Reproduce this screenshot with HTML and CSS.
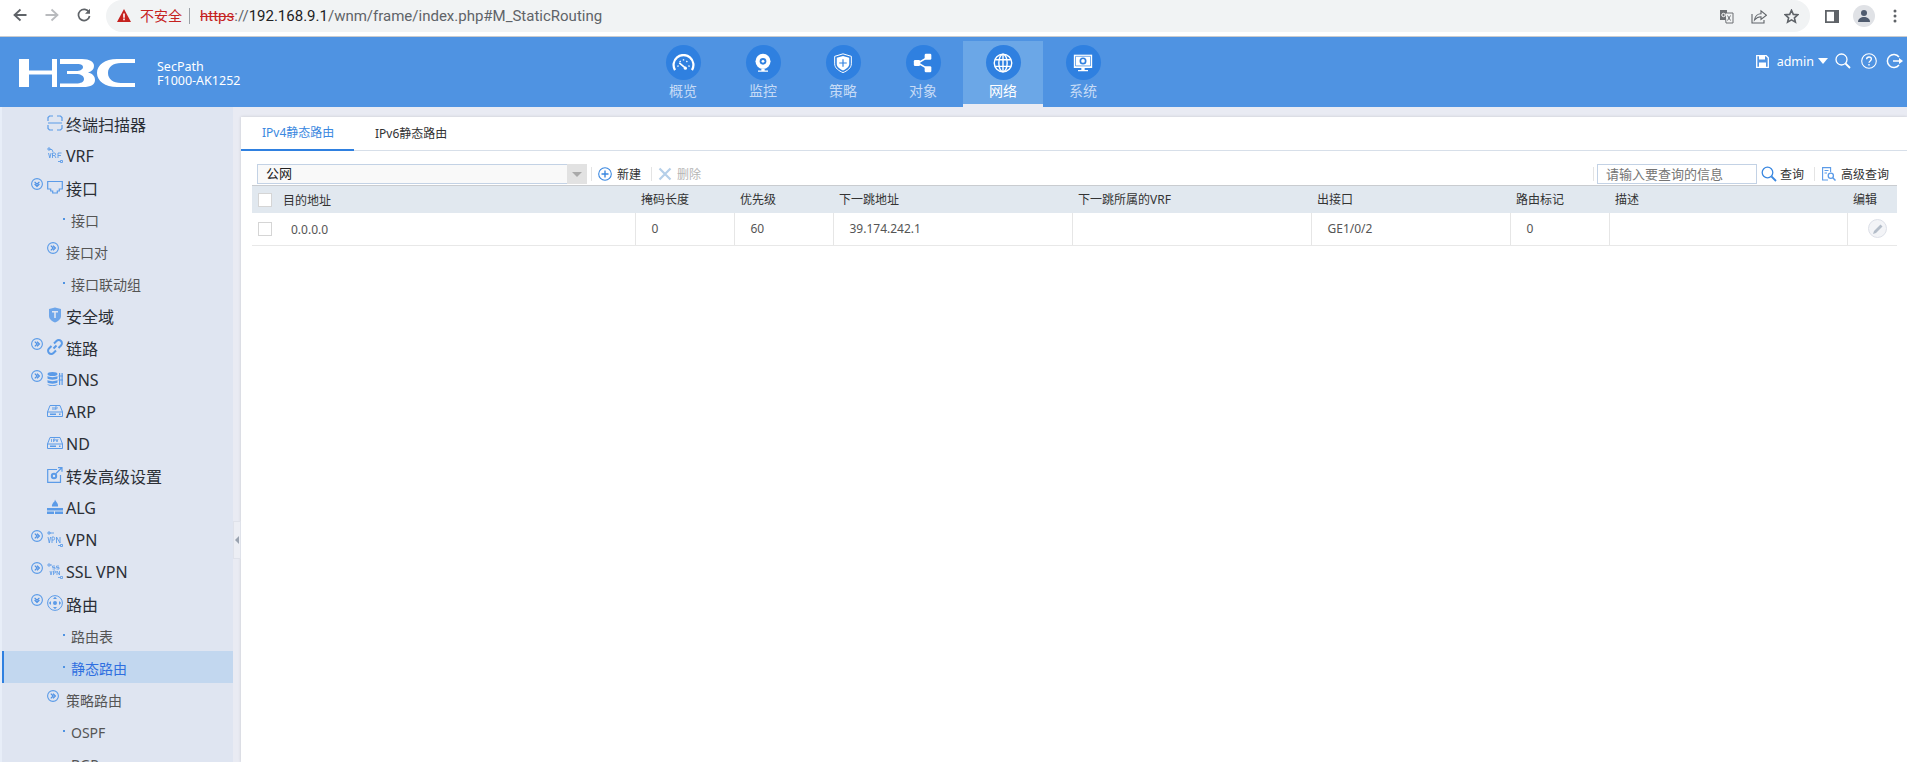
FILE: index.html
```html
<!DOCTYPE html>
<html lang="zh-CN">
<head>
  <meta charset="UTF-8" />
  <title>H3C SecPath F1000-AK1252</title>
  <link rel="stylesheet" href="styles.css">
</head>
<body>
  <svg class="defs" width="0" height="0">
    <symbol id="arrow-right" viewBox="0 0 12 12">
      <circle cx="6" cy="6" r="5.4" fill="none" stroke="#5b9be8" stroke-width="1.100"/>
      <path d="M3.800 3.600 6.200 6 3.800 8.400M6 3.600 8.400 6 6 8.400" fill="none" stroke="#4a8fe4" stroke-width="1.200"/>
    </symbol>
    <symbol id="arrow-down" viewBox="0 0 12 12">
      <circle cx="6" cy="6" r="5.4" fill="none" stroke="#5b9be8" stroke-width="1.100"/>
      <path d="M3.600 3.800 6 6.200 8.400 3.800M3.600 6 6 8.400 8.400 6" fill="none" stroke="#4a8fe4" stroke-width="1.200"/>
    </symbol>
  </svg>

  <!-- Browser bar -->
  <div class="browser-bar">
    <svg class="nav-arrow" viewBox="0 0 14 14"><path d="M13.500 7H2M7.500 1.500 1.500 7 7.500 12.500" fill="none" stroke="#5f6368" stroke-width="1.800"/></svg>
    <svg class="nav-arrow" viewBox="0 0 14 14"><path d="M.5 7H12M6.500 1.500 12.500 7 6.500 12.500" fill="none" stroke="#b9bbbe" stroke-width="1.800"/></svg>
    <svg class="nav-arrow" viewBox="0 0 14 14"><path d="M12 4.200A5.600 5.600 0 1 0 12.600 8" fill="none" stroke="#5f6368" stroke-width="1.700"/><path d="M13 .8v5H8z" fill="#5f6368"/></svg>
    <div class="omnibox">
      <svg class="warn" viewBox="0 0 14 13"><path d="M7 0 14 13H0z" fill="#c5221f"/><path d="M6.200 4.500h1.600v4.300H6.200zM6.200 9.600h1.600v1.600H6.200z" fill="#fff"/></svg>
      <span class="insecure">不安全</span>
      <span class="url"><s>https</s><span class="url-dim">://</span><span class="url-host">192.168.9.1</span><span class="url-dim">/wnm/frame/index.php#M_StaticRouting</span></span>
      <div class="omni-icons">
        <svg viewBox="0 0 15 15" width="15" height="15"><path d="M1 1h7v10H1z" fill="#6c6f73"/><path d="M6 4h8v10H7z" fill="#f1f3f4" stroke="#6c6f73"/><path d="M8.500 6.500l3 5M11.500 6.500l-3 5" stroke="#6c6f73" fill="none"/><circle cx="4.500" cy="6" r="1.700" fill="none" stroke="#fff"/></svg>
        <svg viewBox="0 0 16 15" width="16" height="15"><path d="M1 5v9h12v-3" fill="none" stroke="#5f6368" stroke-width="1.100"/><path d="M3.500 11C4 7 7 4.800 10 4.800V1.800L15.500 6.300 10 10.500V7.800C7.500 7.800 5.500 8.800 3.500 11z" fill="none" stroke="#5f6368" stroke-width="1.100"/></svg>
        <svg viewBox="0 0 15 15" width="15" height="15"><path d="M7.500 1.300 9.300 5.400l4.500.4-3.400 3 1 4.400-3.900-2.300-3.900 2.300 1-4.400-3.400-3 4.500-.4z" fill="none" stroke="#5f6368" stroke-width="1.600"/></svg>
      </div>
    </div>
    <div class="browser-icons">
      <svg viewBox="0 0 14 13" width="14" height="13"><path d="M0 0h14v13H0zM1.800 1.800v9.400H9V1.800z" fill="#5f6368" fill-rule="evenodd"/></svg>
      <div class="avatar"><svg viewBox="0 0 14 14" width="14" height="14"><circle cx="7" cy="4" r="3" fill="#4f5b6e"/><path d="M1 13c0-3.500 3-5 6-5s6 1.500 6 5z" fill="#4f5b6e"/></svg></div>
      <svg viewBox="0 0 4 14" width="4" height="14"><circle cx="2" cy="2" r="1.500" fill="#5f6368"/><circle cx="2" cy="7" r="1.500" fill="#5f6368"/><circle cx="2" cy="12" r="1.500" fill="#5f6368"/></svg>
    </div>
  </div>

  <!-- Header -->
  <header class="top">
    <div class="brand">
      <svg class="logo" viewBox="0 0 116 28" width="116" height="28">
        <path d="M0 0h10v11.500h23V0h5v28h-5V15.500H10V28H0z" fill="#fff"/>
        <path d="M41 0h22c8 0 12 3 12 7 0 3-2 5.500-6 6.500 4.500 1 7 3.500 7 7.500 0 4.500-4 7-12 7H41v-3.500h16c5 0 8-1.500 8-4.500s-3-5-8-5H48v-3h9c4 0 7-1.500 7-4s-3-3-7-3H41z" fill="#fff"/>
        <path d="M116 0H98C86 0 78 6 78 14s8 14 20 14h18v-4h-14c-8 0-13-4-13-10s5-10 13-10h14z" fill="#fff"/>
      </svg>
      <div class="model">SecPath<br>F1000-AK1252</div>
    </div>
    <nav class="main-nav">
      <a class="nav-item">
        <span class="nav-circle"><svg class="gauge" viewBox="0 0 24 18" fill="none" stroke="#fff"><path d="M3 17A10.500 10.500 0 1 1 21 17" stroke-width="2.400"/><path d="M5.500 12.500l1.300.5M8 7.500l.9.9M12 5.500v1.400M16 7.500l-.9.900M18.500 12.500l-1.300.5" stroke-width="1.500"/><path d="M7.500 9.500l6 5" stroke-width="1.700"/><circle cx="14" cy="15" r="1.700" fill="#fff" stroke="none"/></svg></span>
        概览
      </a>
      <a class="nav-item">
        <span class="nav-circle"><svg viewBox="0 0 24 24"><circle cx="12" cy="10" r="9" fill="#fff"/><circle cx="12" cy="10" r="4" fill="#2f80e0"/><circle cx="12" cy="10" r="1.700" fill="#fff"/><path d="M10 18.500h4v2.500h4v1.500H6V21h4z" fill="#fff"/></svg></span>
        监控
      </a>
      <a class="nav-item">
        <span class="nav-circle"><svg viewBox="0 0 24 24"><path d="M12 1l10 3v9c0 5-5 8.500-10 10.500C7 21.500 2 18 2 13V4z" fill="none" stroke="#fff" stroke-width="1.200"/><path d="M12 3.500l7.500 2.200V13c0 3.800-3.700 6.500-7.500 8-3.800-1.500-7.500-4.200-7.500-8V5.700z" fill="#fff"/><path d="M12 7.500v9M7.500 12h9" stroke="#2f80e0" stroke-width="1.400"/></svg></span>
        策略
      </a>
      <a class="nav-item">
        <span class="nav-circle"><svg viewBox="0 0 24 24"><path d="M6 12 18 5M6 12l12 7" stroke="#fff" stroke-width="1.800"/><rect x="1" y="8.500" width="7.500" height="7" rx="1.500" fill="#fff"/><rect x="14" y="1" width="8" height="7" rx="1.500" fill="#fff"/><rect x="14" y="16" width="8" height="7" rx="1.500" fill="#fff"/></svg></span>
        对象
      </a>
      <a class="nav-item active">
        <span class="nav-circle"><svg viewBox="0 0 24 24" fill="none" stroke="#fff" stroke-width="1.700"><circle cx="12" cy="12" r="10.500"/><ellipse cx="12" cy="12" rx="5" ry="10.500"/><path d="M12 1.500v21M2.500 8h19M2.500 16h19"/></svg></span>
        网络
      </a>
      <a class="nav-item">
        <span class="nav-circle"><svg viewBox="0 0 24 24"><path d="M1 2h22v16H1z" fill="#fff"/><path d="M3 4h18v11.500H3z" fill="none" stroke="#2f80e0" stroke-width=".8"/><circle cx="12" cy="9.500" r="3.200" fill="none" stroke="#2f80e0" stroke-width="2"/><path d="M10 18h4v2.500h4V22H6v-1.500h4z" fill="#fff"/></svg></span>
        系统
      </a>
    </nav>
    <div class="tools">
      <svg viewBox="0 0 13 13" width="13" height="13"><path d="M.7.700h9.500l2.100 2.100v9.500H.7z" fill="none" stroke="#fff" stroke-width="1.300"/><path d="M3 1h6v3.500H3zM3 7.500h7v4.500H3z" fill="#fff"/></svg>
      <span class="user">admin</span>
      <span class="caret"></span>
      <svg class="tool-search" viewBox="0 0 16 16" width="16" height="16"><circle cx="6.500" cy="6.500" r="5.500" fill="none" stroke="#fff" stroke-width="1.300"/><path d="M10.500 10.500 15 15" stroke="#fff" stroke-width="1.800"/></svg>
      <svg class="tool-help" viewBox="0 0 16 16" width="16" height="16"><circle cx="8" cy="8" r="7.300" fill="none" stroke="#fff" stroke-width="1.100"/><path d="M5.600 6.200C5.700 4.700 6.800 4 8 4c1.400 0 2.400.9 2.400 2.100 0 1.800-2.400 1.800-2.400 3.700" fill="none" stroke="#fff" stroke-width="1.300"/><path d="M7.300 11h1.400v1.400H7.300z" fill="#fff"/></svg>
      <svg class="tool-exit" viewBox="0 0 17 16" width="17" height="16"><path d="M13 4A6.500 6.500 0 1 0 13 12" fill="none" stroke="#fff" stroke-width="1.500"/><path d="M7 8h8" stroke="#fff" stroke-width="1.500"/><path d="M13 5l4 3-4 3z" fill="#fff"/></svg>
    </div>
  </header>

  <div class="page">
    <!-- Side menu -->
    <aside class="side">
      <div class="menu-row"><span class="arrow"></span><svg class="ico" viewBox="0 0 16 16" fill="none" stroke="#5b9be8" stroke-width="1.200"><path d="M1 6V2.500L2.500 1H6M10 1h3.500L15 2.500V6M1 10v3.500L2.500 15H6M10 15h3.500l1.500-1.500V10M1 8h14"/></svg><span class="label">终端扫描器</span></div>
      <div class="menu-row"><span class="arrow"></span><svg class="ico" viewBox="0 0 16 16" fill="none" stroke="#5b9be8" stroke-width=".9"><path d="M2.500 2.500H5L6 5M1 1h2v2H1zM11 14.500h2.500M13.500 13.500h2v2h-2z"/><path d="M1.500 6l1.300 5 1.300-5M5.500 11V6h2c1.500 0 1.500 2.500 0 2.500h-2M7.500 8.500 9 11M11 11V6h3.500M11 8.500h3"/></svg><span class="label">VRF</span></div>
      <div class="menu-row"><svg class="arrow" viewBox="0 0 12 12"><use href="#arrow-down"/></svg><svg class="ico" viewBox="0 0 16 16" fill="none" stroke="#5b9be8" stroke-width="1.200"><path d="M.7 2.500h14.600v7.500h-3v2h-2v2H5.700v-2h-2v-2h-3z"/></svg><span class="label">接口</span></div>
      <div class="menu-row sub leaf"><span class="dot"></span><span class="label">接口</span></div>
      <div class="menu-row sub"><svg class="arrow" viewBox="0 0 12 12"><use href="#arrow-right"/></svg><span class="label">接口对</span></div>
      <div class="menu-row sub leaf"><span class="dot"></span><span class="label">接口联动组</span></div>
      <div class="menu-row"><span class="arrow"></span><svg class="ico" viewBox="0 0 16 16"><path d="M8 .5 14 2v7c0 3-3 5.500-6 6.500C5 14.500 2 12 2 9V2z" fill="#6ea6ea"/><path d="M5 4h6v1.500H8.800V11H7.200V5.500H5z" fill="#dfe5f1"/></svg><span class="label">安全域</span></div>
      <div class="menu-row"><svg class="arrow" viewBox="0 0 12 12"><use href="#arrow-right"/></svg><svg class="ico" viewBox="0 0 16 16" fill="none" stroke="#5b9be8" stroke-width="2"><path d="M6.500 9.500 9.500 6.500M7 4.500 9.500 2a3 3 0 0 1 4.500 4.500L11.500 9M9 11.500 6.500 14A3 3 0 0 1 2 9.500L4.500 7"/></svg><span class="label">链路</span></div>
      <div class="menu-row"><svg class="arrow" viewBox="0 0 12 12"><use href="#arrow-right"/></svg><svg class="ico" viewBox="0 0 16 16" fill="#5b9be8"><ellipse cx="5.500" cy="3" rx="5" ry="2"/><path d="M.5 5c1.500 1.500 8.500 1.500 10 0v2.500c-1.500 1.500-8.500 1.500-10 0zM.5 9c1.500 1.500 8.500 1.500 10 0v2.500c-1.500 1.500-8.500 1.500-10 0zM.5 13c1.500 1.500 8.500 1.500 10 0v.5c-1.500 2-8.500 2-10 0z"/><path d="M12 2h1.200v12H12zM14.500 2h1.200v12h-1.200zM11.500 4.500H16v1h-4.500zM11.500 8.500H16v1h-4.500z"/></svg><span class="label">DNS</span></div>
      <div class="menu-row"><span class="arrow"></span><svg class="ico" viewBox="0 0 16 16" fill="none" stroke="#5b9be8"><path d="M3 2.500h10L15.500 9v4.500H.5V9zM.5 9h15"/><path d="M3 11.200h6M12 11.200h1.500" stroke-width="1.400"/><path d="M6 4v3M8 7V4h1.500c1 0 1 1.800 0 1.800H8"/></svg><span class="label">ARP</span></div>
      <div class="menu-row"><span class="arrow"></span><svg class="ico" viewBox="0 0 16 16" fill="none" stroke="#5b9be8"><path d="M3 2.500h10L15.500 9v4.500H.5V9zM.5 9h15"/><path d="M3 11.200h6M12 11.200h1.500" stroke-width="1.400"/><path d="M4.500 4v3M6.500 7V4H8v1.800H6.500M9 4l1 3 1-3" stroke-width=".8"/></svg><span class="label">ND</span></div>
      <div class="menu-row"><span class="arrow"></span><svg class="ico" viewBox="0 0 16 16" fill="none" stroke="#5b9be8" stroke-width="1.200"><path d="M10 2.500H.7v12.800h12.800V8"/><path d="M9 6.500 14.500 1M11 .7h4v4"/><circle cx="7" cy="9" r="2.200" stroke-width="2"/></svg><span class="label">转发高级设置</span></div>
      <div class="menu-row"><span class="arrow"></span><svg class="ico" viewBox="0 0 16 16" fill="#5b9be8"><path d="M8 .5c1 2.500 3.500 3.500 3 7H5C4.500 5.500 6 5 6 3.500 7 4 7.500 2.500 8 .5z"/><path d="M0 9h16v2.500H0zM0 12.500h7V15H0zM8 12.500h8V15H8z"/></svg><span class="label">ALG</span></div>
      <div class="menu-row"><svg class="arrow" viewBox="0 0 12 12"><use href="#arrow-right"/></svg><svg class="ico" viewBox="0 0 16 16" fill="none" stroke="#5b9be8" stroke-width=".9"><path d="M2.500 2H7M1 1h2v2H1zM11 14.500h2.500M13.500 13.500h2v2h-2z"/><path d="M1 6l1.300 6 1.300-6M5 12V6h1.500c1.500 0 1.500 3 0 3H5M9.500 12V6l3.500 6V6"/></svg><span class="label">VPN</span></div>
      <div class="menu-row"><svg class="arrow" viewBox="0 0 12 12"><use href="#arrow-right"/></svg><svg class="ico" viewBox="0 0 16 16" fill="none" stroke="#5b9be8" stroke-width=".8"><path d="M1 1h2v2H1zM3 2h2M13.500 13.500h2v2h-2zM11 14.500h2.500"/><path d="M8 3H5.500v1.500H8V6H5.500M12 3H9.500v1.500H12V6H9.500M3 8l1 4 1-4M6.500 12V8H8c1 0 1 2 0 2H6.500M10 12V8l2.500 4V8"/></svg><span class="label">SSL VPN</span></div>
      <div class="menu-row"><svg class="arrow" viewBox="0 0 12 12"><use href="#arrow-down"/></svg><svg class="ico" viewBox="0 0 16 16" fill="none" stroke="#5b9be8"><circle cx="8" cy="8" r="7.400"/><path d="M8 1.800 10 4H6zM8 14.200 6 12h4zM1.800 8 4 6v4zM14.200 8 12 10V6z" fill="#5b9be8" stroke="none"/><circle cx="8" cy="8" r="2" fill="#5b9be8" stroke="none"/></svg><span class="label">路由</span></div>
      <div class="menu-row sub leaf"><span class="dot"></span><span class="label">路由表</span></div>
      <div class="menu-row sub leaf selected"><span class="dot"></span><span class="label">静态路由</span></div>
      <div class="menu-row sub"><svg class="arrow" viewBox="0 0 12 12"><use href="#arrow-right"/></svg><span class="label">策略路由</span></div>
      <div class="menu-row sub leaf"><span class="dot"></span><span class="label">OSPF</span></div>
      <div class="menu-row sub leaf"><span class="dot"></span><span class="label">BGP</span></div>
    </aside>
    <div class="gutter"><span class="collapse-btn"></span></div>

    <!-- Content -->
    <main class="panel">
      <div class="tabs">
        <a class="tab active">IPv4静态路由</a>
        <a class="tab">IPv6静态路由</a>
      </div>
      <div class="toolbar">
        <div class="select"><span class="select-text">公网</span><span class="select-btn"></span></div>
        <span class="sep first"></span>
        <a class="tool-btn"><svg viewBox="0 0 14 14" width="14" height="14" fill="none" stroke="#3b88e0" stroke-width="1.100"><circle cx="7" cy="7" r="6.300"/><path d="M7 3.500v7M3.500 7h7" stroke-width="1.400"/></svg>新建</a>
        <span class="sep after-new"></span>
        <a class="tool-btn disabled"><svg viewBox="0 0 14 14" width="14" height="14" stroke="#b5cfe9" stroke-width="2.200"><path d="M1.500 1.500l11 11M12.500 1.500l-11 11"/></svg>删除</a>
        <span class="sep push"></span>
        <input class="search" type="text" placeholder="请输入要查询的信息">
        <a class="tool-btn query"><svg viewBox="0 0 16 16" width="16" height="16" fill="none" stroke="#3b88e0"><circle cx="6.500" cy="6.500" r="5.300" stroke-width="1.300"/><path d="M10.500 10.500 15 15" stroke-width="1.800"/></svg>查询</a>
        <span class="sep after-query"></span>
        <a class="tool-btn"><svg viewBox="0 0 14 14" width="14" height="14" fill="none" stroke="#5b9be8" stroke-width="1.100"><path d="M6 13H.6V.6h8V5"/><path d="M2.500 3.500h4M2.500 6h2.500" /><circle cx="8.800" cy="8.800" r="2.600" stroke-width="1.300"/><path d="M10.800 10.800 13.500 13.500" stroke-width="1.500"/></svg>高级查询</a>
      </div>
      <table class="grid">
        <colgroup>
          <col class="c-dest"><col class="c-mask"><col class="c-pri"><col class="c-hop"><col class="c-vrf"><col class="c-if"><col class="c-tag"><col class="c-desc"><col class="c-edit">
        </colgroup>
        <thead>
          <tr>
            <th class="dest-head"><span class="check"></span><span>目的地址</span></th>
            <th>掩码长度</th>
            <th>优先级</th>
            <th>下一跳地址</th>
            <th>下一跳所属的VRF</th>
            <th>出接口</th>
            <th>路由标记</th>
            <th>描述</th>
            <th>编辑</th>
          </tr>
        </thead>
        <tbody>
          <tr>
            <td class="dest-cell"><span class="check"></span><span>0.0.0.0</span></td>
            <td>0</td>
            <td>60</td>
            <td>39.174.242.1</td>
            <td></td>
            <td>GE1/0/2</td>
            <td>0</td>
            <td></td>
            <td class="edit-cell"><span class="edit-btn"><svg viewBox="0 0 12 12" width="12" height="12"><path d="M8.500 1.500l2 2L4 10l-3 1 1-3z" fill="#b4bdc9"/></svg></span></td>
          </tr>
        </tbody>
      </table>
    </main>
  </div>
</body>
</html>
```

FILE: styles.css
```css
* {
  box-sizing: border-box;
}
html, body {
  height: 100%;
  margin: 0;
  overflow: hidden;
}
body {
  display: flex;
  flex-direction: column;
  font-family: "Noto Sans", "Noto Sans CJK SC", sans-serif;
  font-size: 12px;
  color: #333;
  background: #e9ebf3;
}
.defs {
  position: absolute;
}

/* browser bar */
.browser-bar {
  display: flex;
  align-items: flex-start;
  flex: none;
  height: 37px;
  background: #fff;
  border-bottom: 1px solid #c9cbce;
  padding-left: 13px;
}
.nav-arrow {
  width: 14px;
  height: 14px;
  margin: 8px 18px 0 0;
}
.omnibox {
  display: flex;
  align-items: center;
  width: 1704px;
  height: 32px;
  margin-left: -3px;
  padding-left: 11px;
  background: #f1f3f4;
  border-radius: 16px;
}
.warn {
  width: 14px;
  height: 13px;
  margin-bottom: 2px;
}
.insecure {
  width: 50px;
  margin-left: 9px;
  height: 16px;
  line-height: 16px;
  font-size: 14px;
  color: #c5221f;
  border-right: 1px solid #9aa0a6;
}
.url {
  margin-left: 10px;
  font-family: "Roboto", sans-serif;
  font-size: 15px;
  color: #5f6368;
}
.url s {
  color: #c5221f;
}
.url-host {
  color: #202124;
}
.omni-icons {
  display: flex;
  align-items: center;
  gap: 17px;
  margin-left: auto;
  margin-right: 11px;
}
.browser-icons {
  display: flex;
  align-items: center;
  margin-left: 15px;
  height: 32px;
}
.avatar {
  display: flex;
  align-items: center;
  justify-content: center;
  width: 22px;
  height: 22px;
  margin: 0 18px 0 14px;
  border-radius: 50%;
  background: #e0e2e6;
}

/* header */
.top {
  display: flex;
  flex: none;
  height: 70px;
  background: #4f93e2;
  color: #fff;
}
.brand {
  display: flex;
  align-items: center;
  width: 643px;
  padding-left: 19px;
}
.logo {
  margin-top: 1px;
}
.model {
  margin-left: 22px;
  margin-top: 3px;
  font-size: 12.500px;
  line-height: 14px;
}
.main-nav {
  display: flex;
  height: 70px;
  padding-top: 4px;
}
.nav-item {
  display: flex;
  flex-direction: column;
  align-items: center;
  width: 80px;
  padding-top: 4px;
  font-size: 14px;
  line-height: 20px;
  color: #c6dbf6;
}
.nav-item.active {
  color: #fff;
  background: #6ba7e7;
  border-bottom: 3px solid #e9ebf3;
}
.nav-circle {
  display: flex;
  align-items: center;
  justify-content: center;
  width: 35px;
  height: 35px;
  margin-bottom: 1px;
  border-radius: 50%;
  background: #2f80e0;
}
.nav-circle svg {
  width: 20px;
  height: 20px;
}
.nav-circle svg.gauge {
  width: 23px;
  height: 17px;
}
.tools {
  display: flex;
  align-items: center;
  height: 26px;
  margin: 11px 0 0 auto;
  padding-right: 4px;
}
.user {
  margin-left: 8px;
  font-size: 12.500px;
}
.caret {
  width: 0;
  height: 0;
  margin-left: 4px;
  border-left: 5.500px solid transparent;
  border-right: 5.500px solid transparent;
  border-top: 6px solid #fff;
}
.tool-search {
  margin-left: 7px;
}
.tool-help {
  margin-left: 10px;
}
.tool-exit {
  margin-left: 9px;
}

/* side menu */
.page {
  display: flex;
  flex: 1;
  min-height: 0;
}
.side {
  flex: none;
  width: 233px;
  padding-left: 2px;
  overflow: hidden;
  background: #dfe5f1;
  border-left: 2px solid #e8eef8;
}
.menu-row {
  display: flex;
  align-items: center;
  height: 32px;
  padding-left: 27px;
  font-size: 16px;
  color: #2b2f36;
}
.label {
  padding-top: 2px;
}
.arrow {
  flex: none;
  width: 12px;
  height: 12px;
  margin: 0 4px 6px 0;
}
.ico {
  flex: none;
  width: 16px;
  height: 16px;
  margin-right: 3px;
}
.sub {
  padding-left: 43px;
  font-size: 14px;
  color: #555;
}
.sub .arrow {
  margin-right: 7px;
}
.leaf {
  padding-left: 59px;
}
.dot {
  width: 2px;
  height: 2px;
  margin-right: 6px;
  background: #4f93e2;
}
.selected {
  margin-left: -2px;
  padding-left: 59px;
  border-left: 2px solid #2f80e0;
  background: #c2d7ef;
  color: #2f6fe0;
}
.gutter {
  position: relative;
  flex: none;
  width: 8px;
}
.collapse-btn {
  position: absolute;
  left: 0;
  top: 414px;
  width: 8px;
  height: 38px;
  border: 1px solid #dfe2ea;
  background: #eceef4;
}
.collapse-btn::after {
  content: '';
  position: absolute;
  left: 1px;
  top: 14px;
  border-top: 4px solid transparent;
  border-bottom: 4px solid transparent;
  border-right: 4px solid #9aa3b0;
}

/* content */
.panel {
  flex: 1;
  min-width: 0;
  margin-top: 10px;
  padding-right: 10px;
  background: #fff;
  box-shadow: 0 0 3px rgba(0, 0, 0, 0.15);
}
.tabs {
  display: flex;
  height: 34px;
  margin-right: -10px;
  border-bottom: 1px solid #d7dfe9;
}
.tab {
  display: flex;
  align-items: center;
  width: 113px;
  height: 34px;
  color: #333;
  padding: 0 0 3px 21px;
}
.tab.active {
  color: #3b88e0;
  border-bottom: 2px solid #2f80e0;
}
.toolbar {
  display: flex;
  align-items: center;
  height: 20px;
  margin: 13px 8px 1px 16px;
}
.select {
  display: flex;
  width: 330px;
  height: 20px;
  background: #f9f9f9;
  border: 1px solid #c3d2e5;
}
.select-text {
  flex: 1;
  padding-left: 8px;
  font-size: 13px;
  line-height: 17px;
  color: #222;
}
.select-btn {
  position: relative;
  width: 20px;
  margin: -1px -1px -1px 0;
  background: #e2e2e2;
}
.select-btn::after {
  content: '';
  position: absolute;
  left: 5px;
  top: 8px;
  border-left: 5px solid transparent;
  border-right: 5px solid transparent;
  border-top: 5px solid #a9a9a9;
}
.sep {
  width: 1px;
  height: 14px;
  margin: 0 7px 0 4px;
  background: #e4e4e4;
}
.sep.first {
  margin-right: 6px;
}
.sep.push {
  margin: 0 3px 0 auto;
}
.sep.after-new {
  margin: 0 6px 0 10px;
}
.sep.after-query {
  margin-left: 10px;
}
.tool-btn {
  display: flex;
  align-items: center;
  gap: 5px;
  color: #333;
}
.tool-btn.disabled {
  color: #b5b5b5;
}
.search {
  width: 160px;
  height: 20px;
  margin-left: 0;
  padding: 0 8px;
  font: inherit;
  font-size: 13px;
  border: 1px solid #c3d2e5;
}
.search::placeholder {
  color: #757575;
}
.tool-btn.query {
  margin-left: 4px;
  gap: 3px;
}
.grid {
  width: 1645px;
  margin-left: 11px;
  border-collapse: collapse;
  table-layout: fixed;
}
.c-dest { width: 383px; }
.c-mask { width: 99px; }
.c-pri { width: 99px; }
.c-hop { width: 239px; }
.c-vrf { width: 239px; }
.c-if { width: 199px; }
.c-tag { width: 99px; }
.c-desc { width: 238px; }
.c-edit { width: 50px; }
.grid th {
  height: 27px;
  padding: 0 0 0 6px;
  font-weight: 400;
  text-align: left;
  color: #333;
  background: #e1e8ef;
  border-top: 1px solid #c9ccd0;
}
.grid td {
  height: 33px;
  padding: 0 0 0 16px;
  color: #555;
  border-left: 1px solid #e6e6e6;
  border-bottom: 1px solid #e8e8e8;
}
.grid td:first-child {
  border-left: 0;
}
.grid .dest-head,
.grid .dest-cell {
  padding-left: 6px;
}
.dest-head > span,
.dest-cell > span {
  display: inline-block;
  vertical-align: middle;
}
.check {
  width: 14px;
  height: 14px;
  margin-right: 11px;
  background: #fff;
  border: 1px solid #d5d5d5;
}
.dest-cell .check {
  margin-right: 19px;
}
.edit-cell {
  text-align: right;
}
.grid .edit-cell {
  padding: 0 10px 0 0;
}
.edit-btn {
  display: inline-flex;
  align-items: center;
  justify-content: center;
  width: 19px;
  height: 19px;
  vertical-align: middle;
  background: #f3f4f7;
  border: 1px solid #dde0e8;
  border-radius: 50%;
}
```
